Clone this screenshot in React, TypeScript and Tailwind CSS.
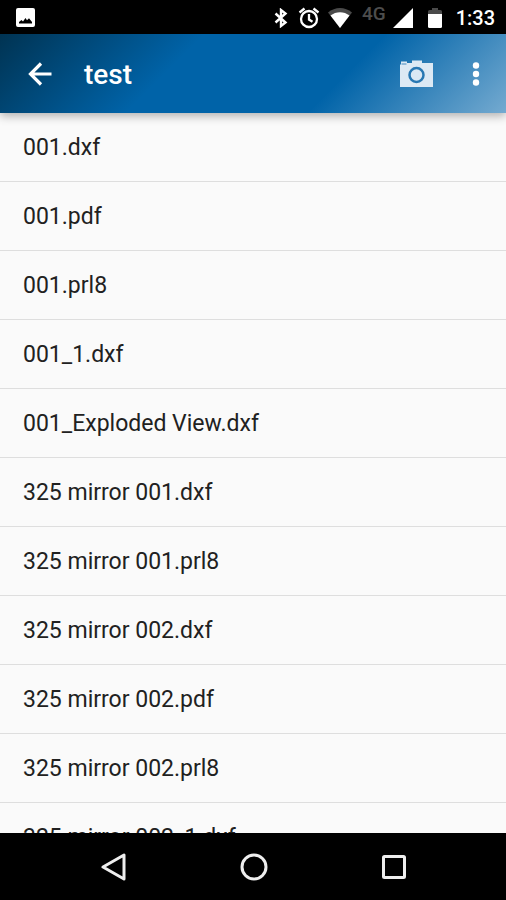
const files = [
  "001.dxf",
  "001.pdf",
  "001.prl8",
  "001_1.dxf",
  "001_Exploded View.dxf",
  "325 mirror 001.dxf",
  "325 mirror 001.prl8",
  "325 mirror 002.dxf",
  "325 mirror 002.pdf",
  "325 mirror 002.prl8",
  "325 mirror 002_1.dxf",
];

function StatusBar() {
  return (
    <div className="flex h-[34px] shrink-0 items-center bg-black pt-px pl-4 pr-[11px] text-white">
      <svg aria-hidden="true" viewBox="0 0 19 19" className="h-[19px] w-[19px]">
        <path
          fill="currentColor"
          fillRule="evenodd"
          d="M2 0h15a2 2 0 0 1 2 2v15a2 2 0 0 1-2 2H2a2 2 0 0 1-2-2V2a2 2 0 0 1 2-2ZM3 15.500h13v-1.500l-3-3.700-2 2-1.500-2.300-2.500 3.500-1.500-1.500L3 14Z"
        />
      </svg>
      <div className="ml-auto flex items-center">
        <svg aria-hidden="true" viewBox="0 0 14 20" className="h-5 w-[14px]">
          <path
            d="m1.500 5.500 10 9L7 18V2l4.500 3.500-10 9"
            fill="none"
            stroke="currentColor"
            strokeWidth="2.400"
          />
        </svg>
        <svg aria-hidden="true" viewBox="0 0 22 22" className="ml-[10px] h-[22px] w-[22px]">
          <g fill="none" stroke="currentColor" strokeWidth="2.300">
            <circle cx="11" cy="12" r="8" />
            <path d="M1.500 5.500 6.500 1.500M20.500 5.500l-5-4M11 7v5.500l3.500 2.200" />
          </g>
        </svg>
        <svg aria-hidden="true" viewBox="0 0 24 20" className="ml-2 h-5 w-6">
          <path d="M0 4.500C7-1.500 17-1.500 24 4.500L12 20Z" fill="#4a4a4a" />
          <path d="M2.500 7.500c5.500-4.500 13.500-4.500 19 0L12 20Z" fill="currentColor" />
        </svg>
        <span className="mb-2 ml-[10px] text-[19px] leading-5 font-medium text-[#4d4d4d]">4G</span>
        <svg aria-hidden="true" viewBox="0 0 20 20" className="ml-[7px] h-5 w-5">
          <path d="M20 0v20H0Z" fill="currentColor" />
        </svg>
        <svg aria-hidden="true" viewBox="0 0 14 20" className="ml-[15px] h-5 w-[14px]">
          <path d="M0 6V3.500Q0 2 1.500 2H4V0h6v2h2.500Q14 2 14 3.500V6Z" fill="#4a4a4a" />
          <path d="M0 6h14v12.500q0 1.500-1.500 1.500h-11Q0 20 0 18.500Z" fill="currentColor" />
        </svg>
        <time className="ml-[14px] text-[20px] leading-6 font-medium">1:33</time>
      </div>
    </div>
  );
}

function AppBar() {
  return (
    <header className="relative z-10 flex h-[79px] shrink-0 items-center bg-[linear-gradient(135deg,#003352_0%,#0063a8_35%,#0063a8_66%,#74aad0_100%)] pl-7 pr-[18px] text-white shadow-[0_3px_9px_rgba(0,0,0,0.3)]">
      <button type="button" aria-label="Back">
        <svg aria-hidden="true" viewBox="0 0 24 24" className="h-6 w-6">
          <path
            d="M23.500 12H2.500M13 1.500 2.500 12 13 22.500"
            fill="none"
            stroke="currentColor"
            strokeWidth="3.200"
          />
        </svg>
      </button>
      <h1 className="ml-8 flex-1 pt-0.5 text-[28px] leading-8 font-medium">test</h1>
      <button type="button" aria-label="Take photo">
        <svg aria-hidden="true" viewBox="0 0 33 27" className="h-[27px] w-[33px] text-[#dce9f4]">
          <path
            d="M0 4.500h1V1.500h6V3h5V0.500h10V3h11v24H0Z"
            fill="currentColor"
          />
          <path d="M1.500 4h5" stroke="#4288bd" />
          <circle cx="16.500" cy="15" r="7" fill="none" stroke="#2878b3" strokeWidth="2.500" />
        </svg>
      </button>
      <button type="button" aria-label="More options" className="ml-[31px]">
        <svg aria-hidden="true" viewBox="0 0 24 24" className="h-6 w-6">
          <g fill="currentColor">
            <circle cx="12" cy="3.500" r="3.200" />
            <circle cx="12" cy="12" r="3.200" />
            <circle cx="12" cy="20.500" r="3.200" />
          </g>
        </svg>
      </button>
    </header>
  );
}

function FileList() {
  return (
    <ul className="min-h-0 flex-1 overflow-hidden">
      {files.map((name) => (
        <li key={name} className="border-b border-[#dedede]">
          <button
            type="button"
            className="block h-[68px] w-full px-[23px] pt-0.5 text-left text-[23px] leading-8 text-[#212121]"
          >
            {name}
          </button>
        </li>
      ))}
    </ul>
  );
}

function NavBar() {
  return (
    <nav className="flex h-[67px] shrink-0 items-center justify-center gap-28 bg-black pl-px text-[#eeeeee]">
      <button type="button" aria-label="Back">
        <svg aria-hidden="true" viewBox="0 0 28 28" className="h-7 w-7">
          <path
            d="M24 2v24L3 14Z"
            fill="none"
            stroke="currentColor"
            strokeWidth="3"
            strokeLinejoin="round"
          />
        </svg>
      </button>
      <button type="button" aria-label="Home">
        <svg aria-hidden="true" viewBox="0 0 28 28" className="h-7 w-7">
          <circle cx="14" cy="14" r="12" fill="none" stroke="currentColor" strokeWidth="3" />
        </svg>
      </button>
      <button type="button" aria-label="Recent apps">
        <svg aria-hidden="true" viewBox="0 0 28 28" className="h-7 w-7">
          <rect
            x="3.500"
            y="3.500"
            width="21"
            height="21"
            rx="1"
            fill="none"
            stroke="currentColor"
            strokeWidth="3"
          />
        </svg>
      </button>
    </nav>
  );
}

export default function App() {
  return (
    <div className="flex h-screen flex-col overflow-hidden bg-[#fafafa] font-[Roboto,sans-serif]">
      <StatusBar />
      <AppBar />
      <FileList />
      <NavBar />
    </div>
  );
}
